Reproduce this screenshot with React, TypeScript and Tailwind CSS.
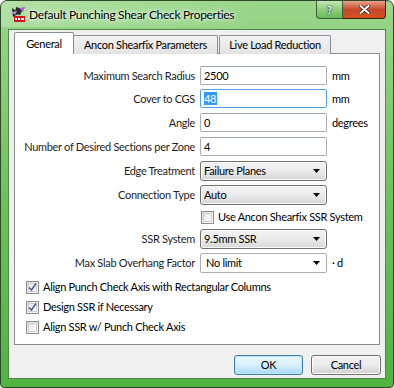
import React from "react";

const font = { fontFamily: 'Lato, "Liberation Sans", sans-serif' };
const T = "text-[11px] leading-[14px] tracking-[-0.3px] whitespace-nowrap";

function TextBox({ value, focused, selected }: { value: string; focused?: boolean; selected?: boolean }) {
  return (
    <div
      className={`h-[19px] w-[127px] bg-white border flex items-center px-[3px] text-black rounded-[2px] ${T} ${
        focused ? "border-[#569de5]" : "border-[#abadb3] border-t-[#9fa3ab]"
      }`}
    >
      {selected ? <span className="bg-[#3399ff] text-white leading-[13px] pr-[1px]">{value}</span> : <span>{value}</span>}
    </div>
  );
}

function Arrow() {
  return (
    <svg width="7" height="4" viewBox="0 0 7 4" className="shrink-0">
      <path d="M0 0 H7 L3.5 4 Z" fill="#000" />
    </svg>
  );
}

function Select({ value }: { value: string }) {
  return (
    <div className={`h-[20px] w-[127px] border border-[#707070] rounded-[3px] bg-gradient-to-b from-[#f2f2f2] via-[#ebebeb] to-[#d6d6d6] flex items-center pl-[3px] pr-[6px] text-black shadow-[inset_0_0_0_1px_#fbfbfb] ${T}`}>
      <span className="flex-1">{value}</span>
      <Arrow />
    </div>
  );
}

function EditCombo({ value }: { value: string }) {
  return (
    <div className={`h-[20px] w-[127px] border border-[#abadb3] bg-white rounded-[2px] flex items-center pl-[5px] pr-[6px] text-black ${T}`}>
      <span className="flex-1">{value}</span>
      <Arrow />
    </div>
  );
}

function Check({ checked }: { checked?: boolean }) {
  return (
    <div className="w-[13px] h-[13px] border border-[#8e8f8f] bg-gradient-to-br from-[#dcdcdc] to-[#fafafa] flex items-center justify-center shrink-0">
      <div className="w-[9px] h-[9px] border border-[#d0d0d0] bg-gradient-to-br from-[#e6e6e6] to-[#ffffff] flex items-center justify-center">
        {checked && (
          <svg width="9" height="9" viewBox="0 0 9 9" className="overflow-visible">
            <path d="M1 4.5 L3.5 7 L8 0.5" stroke="#4a5f97" strokeWidth="1.6" fill="none" />
          </svg>
        )}
      </div>
    </div>
  );
}

function Row({ label, children, unit, top }: { label: string; children: React.ReactNode; unit?: string; top: string }) {
  return (
    <div className={`flex items-center ${top}`}>
      <div className={`w-[180px] text-right text-[#1e1e1e] ${T}`}>{label}</div>
      <div className="ml-[5px]">{children}</div>
      {unit && <div className={`ml-[5px] text-black ${T}`}>{unit}</div>}
    </div>
  );
}

function CheckRow({ checked, label, top }: { checked?: boolean; label: string; top: string }) {
  return (
    <div className={`flex items-center h-[14px] ml-[11px] ${top}`}>
      <Check checked={checked} />
      <span className={`ml-[4px] text-black ${T}`}>{label}</span>
    </div>
  );
}

export default function App() {
  return (
    <div className="w-[394px] h-[388px] bg-white" style={font}>
      <div className="w-[394px] h-[388px] rounded-t-[7px] rounded-b-[4px] border border-[#2c4a27] bg-gradient-to-b from-[#9ad68a] via-[#6cc25c] to-[#4fb441] flex flex-col relative overflow-hidden">
        <div className="absolute left-0 top-0 w-[260px] h-[26px] bg-gradient-to-r from-[#ffffff40] to-transparent pointer-events-none" />
        {/* title bar */}
        <div className="h-[28px] flex items-start relative">
          <svg width="16" height="16" viewBox="0 0 16 16" className="ml-[9px] mt-[5px]">
            <path d="M2 2 L9 7 L3 11 Z" fill="#1b1b1b" />
            <path d="M6 1 L13 3 L10 9 L5 8 Z" fill="#2a2a2a" />
            <path d="M9 2 L15 1 L13 6 Z" fill="#b25cd8" />
            <path d="M1 6 L7 5 L5 9 Z" fill="#c67fe6" />
            <rect x="4" y="10" width="11" height="6" fill="#d1151b" />
            <rect x="5" y="12" width="2" height="2" fill="#fff" />
            <rect x="8" y="12" width="2" height="2" fill="#fff" />
            <rect x="11" y="12" width="3" height="2" fill="#fff" />
          </svg>
          <div className="ml-[3px] mt-[6px] text-[12px] leading-[16px] tracking-[-0.3px] text-black whitespace-nowrap [text-shadow:0_0_6px_#ffffff,0_0_3px_#ffffff]">
            Default Punching Shear Check Properties
          </div>
          <div className="ml-auto mr-[7px] flex">
            <div className="w-[27px] h-[18px] border border-[#3b5a37] border-t-0 rounded-bl-[4px] bg-gradient-to-b from-[#c3e6b7] via-[#8fce7d] to-[#6bbb5a] flex items-center justify-center">
              <span className="text-white font-bold text-[12px] leading-none [text-shadow:0_0_1px_#000,0_0_2px_#223]">?</span>
            </div>
            <div className="w-[43px] h-[18px] border border-[#3b1a10] border-t-0 border-l-0 rounded-br-[4px] bg-gradient-to-b from-[#e8a08a] via-[#c7482a] to-[#d4541e] flex items-center justify-center">
              <svg width="11" height="9" viewBox="0 0 11 9">
                <path d="M1.5 1 L9.5 8 M9.5 1 L1.5 8" stroke="#2b1a14" strokeWidth="3.4" strokeLinecap="round" />
                <path d="M1.5 1 L9.5 8 M9.5 1 L1.5 8" stroke="#ffffff" strokeWidth="2" strokeLinecap="round" />
              </svg>
            </div>
          </div>
        </div>
        {/* client */}
        <div className="mx-[7px] mb-[8px] flex-1 bg-[#f0f0f0] border border-[#4f8a44] flex flex-col px-[5px] pt-[2px]">
          {/* tabs */}
          <div className="flex items-end h-[22px] relative z-10">
            <div className={`h-[22px] w-[60px] bg-white border border-[#898c95] border-b-0 rounded-t-[2px] flex items-center justify-center text-black ${T}`}>
              General
            </div>
            <div className={`h-[19px] w-[145px] ml-[-1px] bg-gradient-to-b from-[#f3f3f3] to-[#e3e3e3] border border-[#898c95] border-b-0 rounded-t-[2px] flex items-center justify-center text-black ${T}`}>
              Ancon Shearfix Parameters
            </div>
            <div className={`h-[19px] w-[112px] ml-[1px] bg-gradient-to-b from-[#f3f3f3] to-[#e3e3e3] border border-[#898c95] border-b-0 rounded-t-[2px] flex items-center justify-center text-black ${T}`}>
              Live Load Reduction
            </div>
          </div>
          {/* panel */}
          <div className="h-[292px] mt-[-1px] bg-white border border-[#898c95] flex flex-col">
            <Row label="Maximum Search Radius" unit="mm" top="mt-[12px]">
              <TextBox value="2500" />
            </Row>
            <Row label="Cover to CGS" unit="mm" top="mt-[4px]">
              <TextBox value="48" focused selected />
            </Row>
            <Row label="Angle" unit="degrees" top="mt-[5px]">
              <TextBox value="0" />
            </Row>
            <Row label="Number of Desired Sections per Zone" top="mt-[5px]">
              <TextBox value="4" />
            </Row>
            <Row label="Edge Treatment" top="mt-[5px]">
              <Select value="Failure Planes" />
            </Row>
            <Row label="Connection Type" top="mt-[4px]">
              <Select value="Auto" />
            </Row>
            <div className="flex items-center mt-[5px] h-[14px]">
              <div className="w-[186px]" />
              <Check />
              <span className={`ml-[4px] text-black ${T}`}>Use Ancon Shearfix SSR System</span>
            </div>
            <Row label="SSR System" top="mt-[5px]">
              <Select value="9.5mm SSR" />
            </Row>
            <Row label="Max Slab Overhang Factor" unit="· d" top="mt-[4px]">
              <EditCombo value="No limit" />
            </Row>
            <CheckRow checked top="mt-[7px]" label="Align Punch Check Axis with Rectangular Columns" />
            <CheckRow checked top="mt-[6px]" label="Design SSR if Necessary" />
            <CheckRow top="mt-[6px]" label="Align SSR w/ Punch Check Axis" />
          </div>
          {/* buttons */}
          <div className="flex justify-end mt-[10px] mr-[-1px]">
            <div className={`w-[69px] h-[20px] rounded-[3px] border border-[#3c7fb1] bg-gradient-to-b from-[#eaf6fd] via-[#d9f0fc] to-[#a7d9f5] shadow-[inset_0_0_0_1px_#bfe4f7] flex items-center justify-center text-black ${T}`}>
              OK
            </div>
            <div className={`w-[70px] h-[20px] ml-[8px] rounded-[3px] border border-[#707070] bg-gradient-to-b from-[#f2f2f2] via-[#ebebeb] to-[#cfcfcf] shadow-[inset_0_0_0_1px_#fcfcfc] flex items-center justify-center text-black ${T}`}>
              Cancel
            </div>
          </div>
        </div>
      </div>
    </div>
  );
}
